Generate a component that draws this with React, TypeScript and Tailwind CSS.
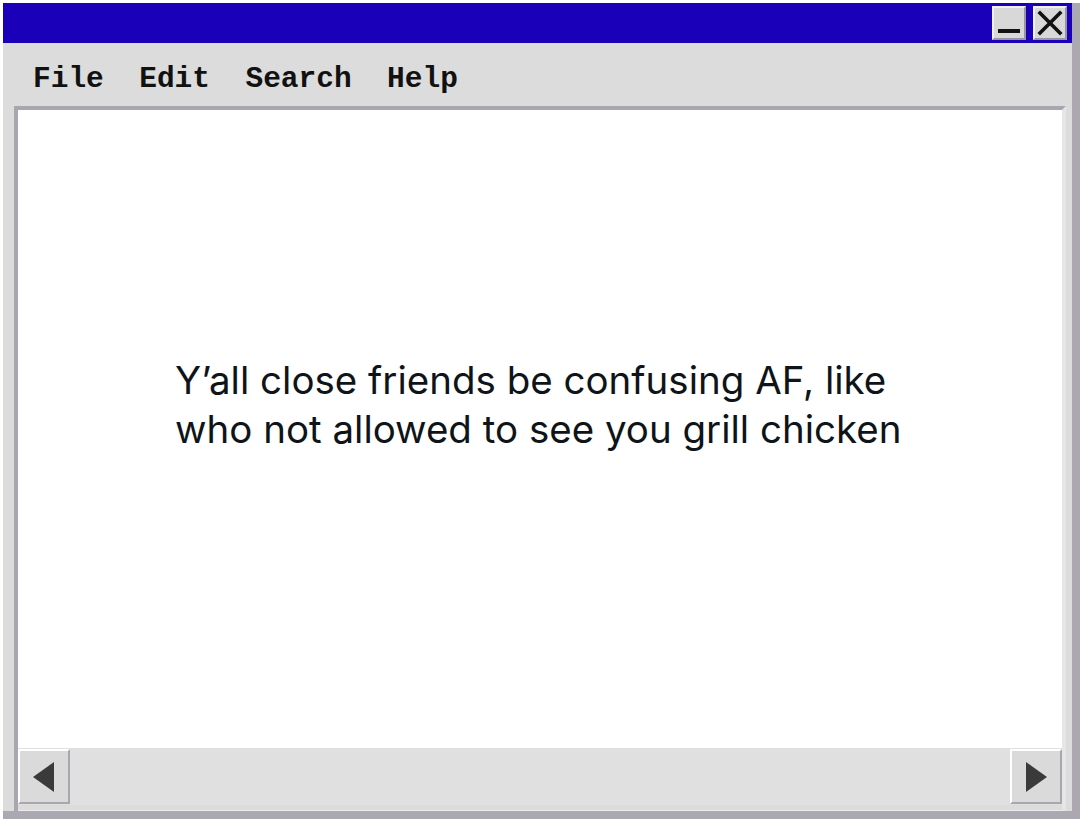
import React from "react";

export default function App() {
  return (
    <div className="w-[1080px] h-[819px] bg-white pt-[3px] pl-[3px] overflow-hidden">
      <div className="w-[1077px] h-[816px] flex flex-col border-r-[8px] border-b-[8px] border-[#aca8b2] bg-[#dcdcdc]">
        {/* title bar */}
        <div className="h-[40px] bg-[#1a00b8] flex items-center justify-end gap-[7px] pr-[5px] shrink-0">
          <div className="w-[34px] h-[34px] bg-[#d8d8d8] border-[2px] border-t-[#f0f0f0] border-l-[#f0f0f0] border-r-[#9a96a0] border-b-[#9a96a0] flex items-end justify-center pb-[5px]">
            <div className="w-[22px] h-[4px] bg-[#111]" />
          </div>
          <div className="w-[34px] h-[34px] bg-[#d8d8d8] border-[2px] border-t-[#f0f0f0] border-l-[#f0f0f0] border-r-[#9a96a0] border-b-[#9a96a0] flex items-center justify-center">
            <svg width="26" height="26" viewBox="0 0 26 26">
              <path d="M3 3 L23 23 M23 3 L3 23" stroke="#111" strokeWidth="3.6" strokeLinecap="square" />
            </svg>
          </div>
        </div>
        {/* menu bar */}
        <div className="h-[63px] shrink-0 flex items-center pl-[30px] pt-[10px]">
          <span className="whitespace-pre text-[29.5px] font-bold text-[#111] leading-none" style={{ fontFamily: '"Liberation Mono", "DejaVu Sans Mono", monospace' }}>
            File  Edit  Search  Help
          </span>
        </div>
        {/* content frame */}
        <div className="flex-1 flex flex-col ml-[11px] mr-[6px] border-l-[4px] border-t-[4px] border-[#aaa6b0] border-r-[4px] border-r-[#e6e6e6]">
          <div className="flex-1 bg-white flex justify-center pt-[246px]">
            <p
              className="text-[#0f1419] text-[38.5px] leading-[49px] w-[730px] whitespace-nowrap"
              style={{ fontFamily: 'Inter, "Noto Sans", sans-serif' }}
            >
              Y’all close friends be confusing AF, like
              <br />
              who not allowed to see you grill chicken
            </p>
          </div>
          {/* scrollbar */}
          <div className="h-[57px] shrink-0 bg-[#e0e0e0] flex items-center justify-between">
            <div className="w-[52px] h-[55px] bg-[#dadada] border-[2px] border-t-white border-l-white border-r-[#aaa6b0] border-b-[#aaa6b0] flex items-center justify-center">
              <svg width="22" height="30" viewBox="0 0 22 30">
                <path d="M21 0 L0 15 L21 30 Z" fill="#3a3a3a" />
              </svg>
            </div>
            <div className="w-[52px] h-[55px] bg-[#dadada] border-[2px] border-t-white border-l-white border-r-[#aaa6b0] border-b-[#aaa6b0] flex items-center justify-center">
              <svg width="22" height="30" viewBox="0 0 22 30">
                <path d="M1 0 L22 15 L1 30 Z" fill="#3a3a3a" />
              </svg>
            </div>
          </div>
          <div className="h-[6px] shrink-0 bg-[#dcdcdc] border-b-[1px] border-[#ececec]" />
        </div>
      </div>
    </div>
  );
}
